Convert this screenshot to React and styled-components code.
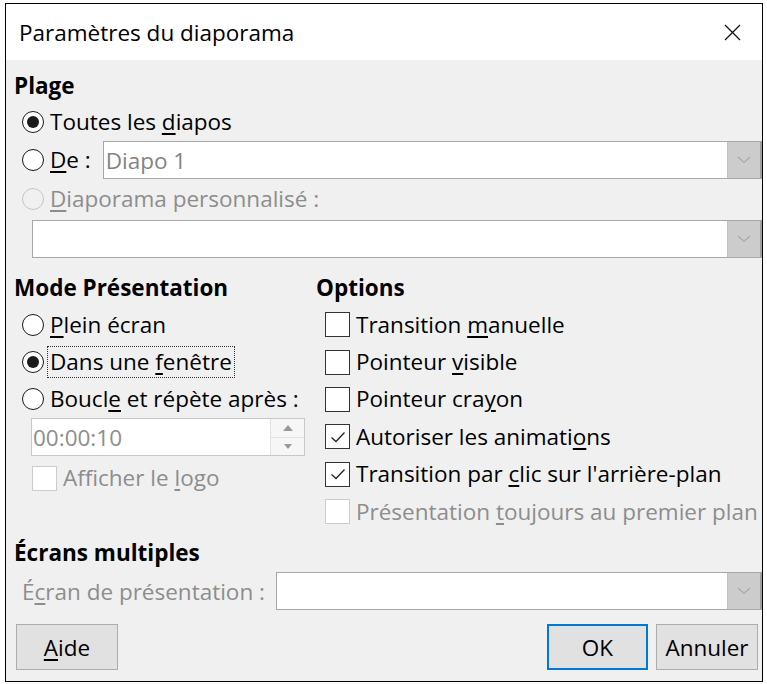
import React from "react";
import styled, { createGlobalStyle } from "styled-components";

const Global = createGlobalStyle`
  html, body { margin: 0; padding: 0; background: #ffffff; }
  body { font-family: "Open Sans", "Noto Sans", sans-serif; }
  * { box-sizing: border-box; }
`;

const FONT = `"Open Sans", "Noto Sans", sans-serif`;
const FS = "22.5px";

const Dialog = styled.div`
  margin: 3px 0 0 5px;
  width: 758px;
  height: 679px;
  border: 1px solid #000;
  background: #f0f0f0;
  display: flex;
  flex-direction: column;
  font-family: ${FONT};
  font-size: ${FS};
  color: #000;
  overflow: hidden;
`;

const TitleBar = styled.div`
  height: 56px;
  flex: none;
  background: #fff;
  display: flex;
  align-items: center;
  justify-content: space-between;
  padding: 0 14px 0 13px;
  font-size: ${FS};
`;

const CloseBtn = styled.div`
  width: 24px;
  height: 24px;
  display: flex;
  align-items: center;
  justify-content: center;
  margin-right: 4px;
`;

const Body = styled.div`
  flex: 1;
  display: flex;
  flex-direction: column;
  padding: 7px 0 0 7px;
`;

const Heading = styled.div`
  height: ${(p) => p.$h || 37}px;
  padding-top: ${(p) => p.$pt || 0}px;
  display: flex;
  align-items: center;
  font-weight: 700;
  margin-left: 1px;
  flex: none;
`;

const Row = styled.div`
  height: ${(p) => p.$h || 37}px;
  flex: none;
  display: flex;
  align-items: center;
  padding-left: ${(p) => p.$indent ?? 9}px;
  color: ${(p) => (p.$disabled ? "#8d8d8d" : "#000")};
  white-space: nowrap;
`;

const Label = styled.span`
  margin-left: ${(p) => p.$gap ?? 6}px;
  padding: 0 2px;
  line-height: 30px;
  border: 1px ${(p) => (p.$focus ? "dotted #333" : "solid transparent")};
  margin-right: ${(p) => p.$mr ?? 0}px;
  u {
    text-decoration: underline;
    text-underline-offset: 3px;
    text-decoration-thickness: 1.5px;
  }
`;

const RadioCircle = styled.span`
  width: 22px;
  height: 22px;
  border-radius: 50%;
  border: 1.7px solid ${(p) => (p.$disabled ? "#c6c6c6" : "#1a1a1a")};
  background: ${(p) => (p.$disabled ? "#f0f0f0" : "#fff")};
  display: flex;
  align-items: center;
  justify-content: center;
  flex: none;
  &::after {
    content: "";
    width: 12px;
    height: 12px;
    border-radius: 50%;
    background: #1a1a1a;
    display: ${(p) => (p.$checked ? "block" : "none")};
  }
`;

const Box = styled.span`
  width: 25px;
  height: 25px;
  border: 1.3px solid ${(p) => (p.$disabled ? "#cccccc" : "#333")};
  background: #fff;
  display: flex;
  align-items: center;
  justify-content: center;
  flex: none;
`;

const Combo = styled.div`
  flex: 1;
  height: 38px;
  display: flex;
  background: #fff;
  border: 1px solid #a8a8a8;
  border-right: none;
  margin-right: ${(p) => p.$mr ?? 0}px;
  margin-left: ${(p) => p.$ml ?? 0}px;
`;

const ComboText = styled.div`
  flex: 1;
  display: flex;
  align-items: center;
  padding-left: 2px;
  color: #838383;
`;

const DropBtn = styled.div`
  width: 35px;
  background: #cccccc;
  border-left: 1px solid #c0c0c0;
  border-right: 2px solid #a0a0a0;
  display: flex;
  align-items: center;
  justify-content: center;
`;

const Columns = styled.div`
  display: grid;
  grid-template-columns: 302px 1fr;
  flex: none;
`;

const Col = styled.div`
  display: flex;
  flex-direction: column;
`;

const Spin = styled.div`
  height: 38px;
  margin-left: 18px;
  width: 274px;
  display: flex;
  background: #fff;
  border: 1px solid #c8c8c8;
`;

const SpinText = styled.div`
  flex: 1;
  display: flex;
  align-items: center;
  padding-left: 1px;
  color: #8d8d8d;
`;

const SpinBtns = styled.div`
  width: 34px;
  display: flex;
  flex-direction: column;
  border-left: 1px solid #e2e2e2;
`;

const SpinHalf = styled.div`
  flex: 1;
  display: flex;
  align-items: center;
  justify-content: center;
  background: #f6f6f6;
  & + & { border-top: 1px solid #e2e2e2; }
`;

const ScreenRow = styled.div`
  height: 38px;
  flex: none;
  display: flex;
  align-items: center;
  padding-left: 9px;
  color: #8d8d8d;
  margin-top: 1px;
  white-space: nowrap;
  u {
    text-underline-offset: 3px;
    text-decoration-thickness: 1.5px;
  }
`;

const Buttons = styled.div`
  display: flex;
  align-items: center;
  margin-top: 14px;
  padding-left: 3px;
  padding-right: 4px;
  flex: none;
`;

const Button = styled.div`
  width: ${(p) => p.$w ?? 102}px;
  height: 46px;
  display: flex;
  align-items: center;
  justify-content: center;
  background: #e1e1e1;
  border: ${(p) => (p.$primary ? "2px solid #0078d7" : "1px solid #adadad")};
  margin-left: ${(p) => p.$ml ?? 0}px;
  u {
    text-underline-offset: 3px;
    text-decoration-thickness: 1.5px;
  }
`;

const Spacer = styled.div`
  flex: 1;
`;

const Chevron = () => (
  <svg width="14" height="8" viewBox="0 0 14 8">
    <path d="M1 1 L7 6.5 L13 1" fill="none" stroke="#a9a9a9" strokeWidth="1.1" />
  </svg>
);

const Check = () => (
  <svg width="18" height="14" viewBox="0 0 18 14">
    <path d="M2.5 7.5 L7 11.5 L15.5 2.5" fill="none" stroke="#222" strokeWidth="1.3" />
  </svg>
);

const Radio = ({ checked, disabled, children, focus, h }) => (
  <Row $h={h} $disabled={disabled}>
    <RadioCircle $checked={checked} $disabled={disabled} />
    <Label $gap={3} $focus={focus}>{children}</Label>
  </Row>
);

const CheckRow = ({ checked, disabled, children, indent, h }) => (
  <Row $h={h} $disabled={disabled} $indent={indent}>
    <Box $disabled={disabled}>{checked && <Check />}</Box>
    <Label $gap={3}>{children}</Label>
  </Row>
);

export default function App() {
  return (
    <>
      <Global />
      <Dialog>
        <TitleBar>
          <span>Paramètres du diaporama</span>
          <CloseBtn>
            <svg width="17" height="17" viewBox="0 0 17 17">
              <path d="M1 1 L16 16 M16 1 L1 16" stroke="#111" strokeWidth="1.3" />
            </svg>
          </CloseBtn>
        </TitleBar>
        <Body>
          <Heading $h={37}>Plage</Heading>
          <Radio checked h={36}>Toutes les <u>d</u>iapos</Radio>
          <Row $h={40}>
            <RadioCircle />
            <Label $gap={3} $mr={9}><u>D</u>e :</Label>
            <Combo>
              <ComboText>Diapo 1</ComboText>
              <DropBtn><Chevron /></DropBtn>
            </Combo>
          </Row>
          <Radio disabled h={38}><u>D</u>iaporama personnalisé :</Radio>
          <Row $h={42} $indent={19}>
            <Combo>
              <ComboText />
              <DropBtn><Chevron /></DropBtn>
            </Combo>
          </Row>
          <Columns>
            <Col>
              <Heading $h={46} $pt={8}>Mode Présentation</Heading>
              <Radio h={37}><u>P</u>lein écran</Radio>
              <Radio checked focus h={37}>Dans une <u>f</u>enêtre</Radio>
              <Radio h={38}>Boucl<u>e</u> et répète après :</Radio>
              <Spin>
                <SpinText>00:00:10</SpinText>
                <SpinBtns>
                  <SpinHalf>
                    <svg width="10" height="6" viewBox="0 0 10 6"><path d="M0 6 L5 0 L10 6Z" fill="#9a9a9a" /></svg>
                  </SpinHalf>
                  <SpinHalf>
                    <svg width="8" height="5" viewBox="0 0 8 5"><path d="M0 0 L8 0 L4 5Z" fill="#9a9a9a" /></svg>
                  </SpinHalf>
                </SpinBtns>
              </Spin>
              <CheckRow disabled indent={19} h={44}>Afficher le <u>l</u>ogo</CheckRow>
            </Col>
            <Col>
              <Heading $h={46} $pt={8}>Options</Heading>
              <CheckRow indent={10} h={37.4}>Transition <u>m</u>anuelle</CheckRow>
              <CheckRow indent={10} h={37.4}>Pointeur <u>v</u>isible</CheckRow>
              <CheckRow indent={10} h={37.4}>Pointeur cra<u>y</u>on</CheckRow>
              <CheckRow checked indent={10} h={37.4}>Autoriser les animati<u>o</u>ns</CheckRow>
              <CheckRow checked indent={10} h={37.4}>Transition par <u>c</u>lic sur l'arrière-plan</CheckRow>
              <CheckRow disabled indent={10} h={37.4}>Présentation <u>t</u>oujours au premier plan</CheckRow>
            </Col>
          </Columns>
          <Heading $h={41} $pt={4}>Écrans multiples</Heading>
          <ScreenRow>
            <span>É<u>c</u>ran de présentation :</span>
            <Combo $ml={11}>
              <ComboText />
              <DropBtn><Chevron /></DropBtn>
            </Combo>
          </ScreenRow>
          <Buttons>
            <Button><span><u>A</u>ide</span></Button>
            <Spacer />
            <Button $primary $w={101}>OK</Button>
            <Button $ml={8}>Annuler</Button>
          </Buttons>
        </Body>
      </Dialog>
    </>
  );
}
